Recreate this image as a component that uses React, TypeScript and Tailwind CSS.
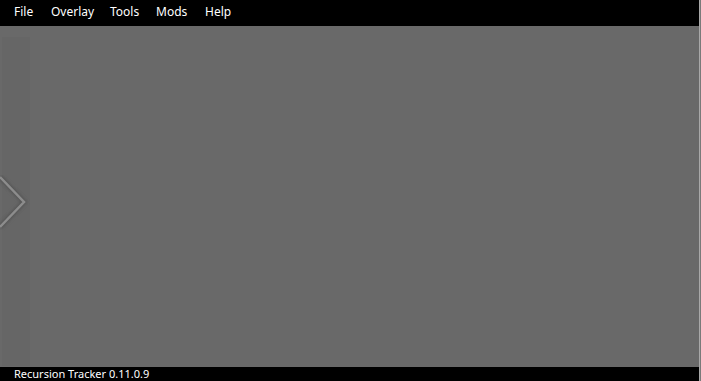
import React from "react";

export default function App() {
  const font = { fontFamily: '"Segoe UI", "Noto Sans", "Open Sans", sans-serif' };
  return (
    <div className="relative w-[701px] h-[381px] overflow-hidden bg-[#696969] flex flex-col" style={font}>
      <div className="h-[26px] bg-black flex items-center pl-[14px] pb-[2px] text-white text-[12px] leading-none">
        <span className="w-[37px]">File</span>
        <span className="w-[59px]">Overlay</span>
        <span className="w-[46px]">Tools</span>
        <span className="w-[49px]">Mods</span>
        <span>Help</span>
      </div>
      <div className="flex-1 flex pt-[11px] pl-[2px] pb-[1px]">
        <div className="relative w-[28px] h-full bg-[#666666]">
          <svg className="absolute left-[-2px] top-[138px]" width="30" height="56" viewBox="0 0 30 56">
            <defs>
              <filter id="b" x="-50%" y="-50%" width="200%" height="200%">
                <feGaussianBlur stdDeviation="1.6" />
              </filter>
            </defs>
            <polyline points="0,2 24,27 0,52" fill="none" stroke="#555" strokeWidth="5" filter="url(#b)" />
            <polyline points="0,2 24,27 0,52" fill="none" stroke="#8c8c8c" strokeWidth="2.5" />
          </svg>
        </div>
      </div>
      <div className="h-[14px] bg-black text-white text-[11px] leading-[14px] pl-[14px]">Recursion Tracker 0.11.0.9</div>
      <div className="absolute right-[1px] top-0 bottom-0 w-[1px] bg-[#a8a8a8]" />
      <div className="absolute right-0 top-0 bottom-0 w-[1px] bg-[#7a7a7a]" />
    </div>
  );
}
